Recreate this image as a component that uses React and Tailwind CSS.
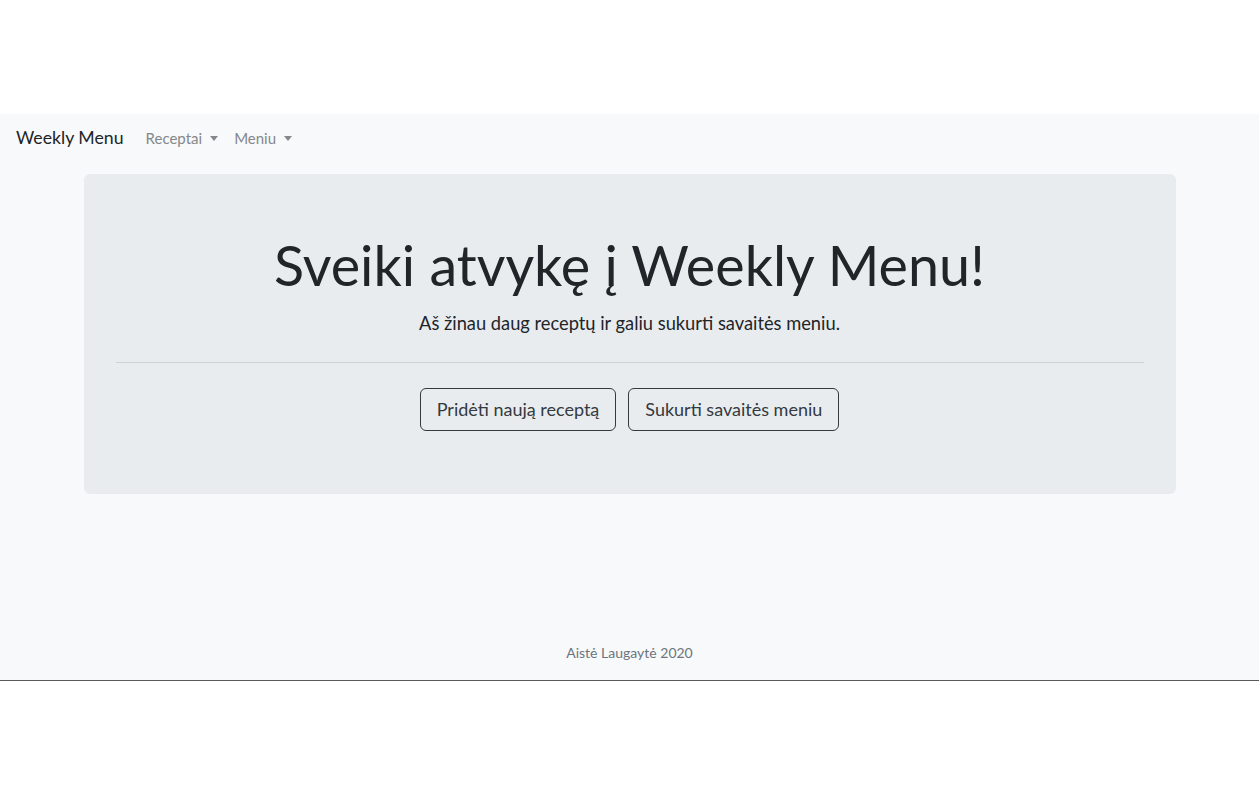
export default function App() {
  return (
    <div className="min-h-[794px] bg-white" style={{ fontFamily: 'Lato, "Open Sans", sans-serif' }}>
      <div className="h-[114px]" />
      <div className="bg-[#f8f9fa] h-[567px] border-b border-[#5a5a5a] flex flex-col">
        {/* ── Navbar ── */}
        <nav className="h-[48px] mb-[12px] flex items-center px-4 gap-[22px]">
          <span className="text-[17.7px] text-[#212529]">Weekly Menu</span>
          <div className="flex items-center gap-4 text-[15px] text-[#85888b]">
            <span className="flex items-center gap-2">
              Receptai
              <span className="border-t-[5px] border-t-[#85888b] border-x-[4.5px] border-x-transparent" />
            </span>
            <span className="flex items-center gap-2">
              Meniu
              <span className="border-t-[5px] border-t-[#85888b] border-x-[4.5px] border-x-transparent" />
            </span>
          </div>
        </nav>

        {/* ── Jumbotron ── */}
        <div className="w-[1092px] h-[320px] mx-auto bg-[#e9ecef] rounded-md px-8 pt-[58px] flex flex-col items-center">
          <h1 className="text-[55.7px] leading-[66px] font-normal text-[#212529]">Sveiki atvykę į Weekly Menu!</h1>
          <p className="text-[18.3px] text-[#212529] mt-[12px]">Aš žinau daug receptų ir galiu sukurti savaitės meniu.</p>
          <hr className="w-full border-t border-[#cfd2d5] mt-[25px]" />
          <div className="flex gap-3 mt-[25px]">
            <button className="h-[43px] px-4 border-[1.5px] border-[#343a40] rounded-md text-[18px] text-[#343a40]">Pridėti naują receptą</button>
            <button className="h-[43px] px-4 border-[1.5px] border-[#343a40] rounded-md text-[18px] text-[#343a40]">Sukurti savaitės meniu</button>
          </div>
        </div>

        {/* ── Footer ── */}
        <footer className="mt-auto pb-[17px] text-center text-[14px] text-[#6c757d]">Aistė Laugaytė 2020</footer>
      </div>
    </div>
  )
}
